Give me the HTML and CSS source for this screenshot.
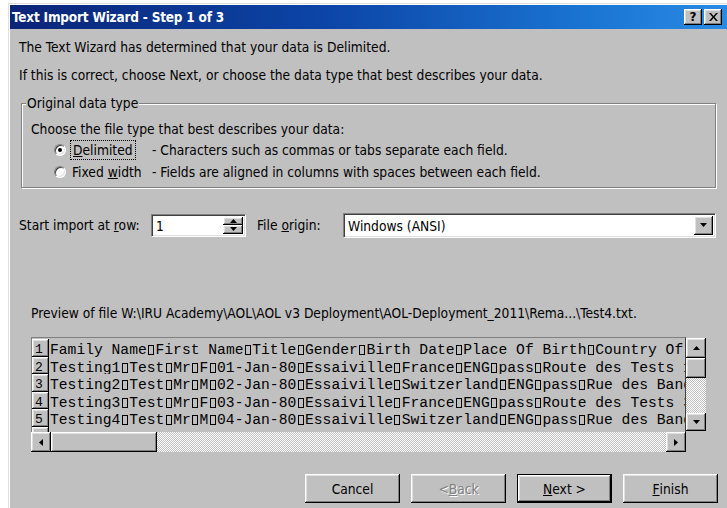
FILE: index.html
```html
<!DOCTYPE html>
<html>
<head>
<meta charset="utf-8">
<title>Text Import Wizard</title>
<link rel="stylesheet" href="styles.css">
</head>
<body>
<div class="window">
  <div class="titlebar">
    <span class="title">Text Import Wizard - Step 1 of 3</span>
    <div class="caption-btns">
      <span class="cbtn help">?</span>
      <span class="cbtn close"><svg width="9" height="8" viewBox="0 0 9 8"><path d="M0 0h2l2.5 3 2.5-3h2L5.5 4 9 8H7L4.5 5 2 8H0l3.5-4z" fill="#000"/></svg></span>
    </div>
  </div>
  <div class="content">
    <p class="intro">The Text Wizard has determined that your data is Delimited.</p>
    <p class="intro second">If this is correct, choose Next, or choose the data type that best describes your data.</p>

    <fieldset class="group">
      <legend>Original data type</legend>
      <p class="choose">Choose the file type that best describes your data:</p>
      <div class="opt">
        <span class="radio checked"></span>
        <span class="opt-label"><span class="focus"><u>D</u>elimited</span></span>
        <span class="opt-desc">- Characters such as commas or tabs separate each field.</span>
      </div>
      <div class="opt">
        <span class="radio"></span>
        <span class="opt-label">Fixed <u>w</u>idth</span>
        <span class="opt-desc">- Fields are aligned in columns with spaces between each field.</span>
      </div>
    </fieldset>

    <div class="import-row">
      <span class="row-label">Start import at <u>r</u>ow:</span>
      <div class="spin">
        <span class="spin-val">1</span>
        <span class="spin-btns">
          <span class="sbtn"><svg width="7" height="4" viewBox="0 0 7 4"><path d="M3.5 0L7 4H0z" fill="#000"/></svg></span>
          <span class="sbtn"><svg width="7" height="4" viewBox="0 0 7 4"><path d="M0 0h7L3.5 4z" fill="#000"/></svg></span>
        </span>
      </div>
      <span class="origin-label">File <u>o</u>rigin:</span>
      <div class="combo">
        <span class="combo-val">Windows (ANSI)</span>
        <span class="combo-btn"><svg width="7" height="4" viewBox="0 0 7 4"><path d="M0 0h7L3.5 4z" fill="#000"/></svg></span>
      </div>
    </div>

    <p class="preview-label">Preview of file W:\IRU Academy\AOL\AOL v3 Deployment\AOL-Deployment_2011\Rema...\Test4.txt.</p>

    <div class="preview">
      <div class="grid">
        <div class="prow"><span class="num">1</span><span class="line">Family Name<i class="t"></i>First Name<i class="t"></i>Title<i class="t"></i>Gender<i class="t"></i>Birth Date<i class="t"></i>Place Of Birth<i class="t"></i>Country Of Residence</span></div>
        <div class="prow"><span class="num">2</span><span class="line">Testing1<i class="t"></i>Test<i class="t"></i>Mr<i class="t"></i>F<i class="t"></i>01-Jan-80<i class="t"></i>Essaiville<i class="t"></i>France<i class="t"></i>ENG<i class="t"></i>pass<i class="t"></i>Route des Tests 1</span></div>
        <div class="prow"><span class="num">3</span><span class="line">Testing2<i class="t"></i>Test<i class="t"></i>Mr<i class="t"></i>M<i class="t"></i>02-Jan-80<i class="t"></i>Essaiville<i class="t"></i>Switzerland<i class="t"></i>ENG<i class="t"></i>pass<i class="t"></i>Rue des Banques</span></div>
        <div class="prow"><span class="num">4</span><span class="line">Testing3<i class="t"></i>Test<i class="t"></i>Mr<i class="t"></i>F<i class="t"></i>03-Jan-80<i class="t"></i>Essaiville<i class="t"></i>France<i class="t"></i>ENG<i class="t"></i>pass<i class="t"></i>Route des Tests 3</span></div>
        <div class="prow"><span class="num">5</span><span class="line">Testing4<i class="t"></i>Test<i class="t"></i>Mr<i class="t"></i>M<i class="t"></i>04-Jan-80<i class="t"></i>Essaiville<i class="t"></i>Switzerland<i class="t"></i>ENG<i class="t"></i>pass<i class="t"></i>Rue des Banques</span></div>
        <div class="prow"><span class="num">6</span><span class="line"></span></div>
      </div>
      <div class="vscroll">
        <span class="sbox"><svg width="7" height="4" viewBox="0 0 7 4"><path d="M3.5 0L7 4H0z" fill="#000"/></svg></span>
        <span class="thumb vthumb"></span>
        <span class="track"></span>
        <span class="sbox"><svg width="7" height="4" viewBox="0 0 7 4"><path d="M0 0h7L3.5 4z" fill="#000"/></svg></span>
      </div>
      <div class="hscroll">
        <span class="sbox"><svg width="4" height="7" viewBox="0 0 4 7"><path d="M0 3.5L4 0v7z" fill="#000"/></svg></span>
        <span class="thumb hthumb"></span>
        <span class="track"></span>
        <span class="sbox"><svg width="4" height="7" viewBox="0 0 4 7"><path d="M0 0l4 3.5L0 7z" fill="#000"/></svg></span>
      </div>
    </div>

    <div class="buttons">
      <span class="btn">Cancel</span>
      <span class="btn disabled">&lt; <u>B</u>ack</span>
      <span class="btn default"><u>N</u>ext &gt;</span>
      <span class="btn"><u>F</u>inish</span>
    </div>
  </div>
</div>
</body>
</html>
```

FILE: styles.css
```css
* { box-sizing: border-box; }

body {
  margin: 0;
  background: #fff;
  font-family: "DejaVu Sans Condensed", "DejaVu Sans", sans-serif;
  font-size: 13.7px;
  color: #000;
}

p { margin: 0; }

/* dialog frame */
.window {
  margin: 3px 0 0 8px;
  width: 719px;
  height: 505px;
  background: #c0c0c0;
  border-left: 1px solid #dfdfdf;
  border-top: 1px solid #dfdfdf;
  box-shadow: inset 1px 1px #fff;
  padding: 1px 0 0 1px;
  overflow: hidden;
}

.titlebar {
  height: 24px;
  display: flex;
  align-items: center;
  justify-content: space-between;
  background: linear-gradient(90deg, #0a2478 0%, #0c46a8 45%, #1a74d2 80%, #2a8ae4 100%);
  padding: 0 5px 0 2px;
}

.title {
  color: #fff;
  font-weight: bold;
  font-size: 13.5px;
  letter-spacing: -0.2px;
}

.caption-btns { display: flex; gap: 2px; }

/* raised 3D look shared by buttons */
.cbtn, .sbtn, .combo-btn, .sbox, .thumb, .num, .btn {
  background: #c0c0c0;
  box-shadow: inset -1px -1px #000, inset 1px 1px #fff, inset -2px -2px #808080, inset 2px 2px #dfdfdf;
}

.cbtn {
  width: 18px;
  height: 16px;
  display: flex;
  align-items: center;
  justify-content: center;
  font-weight: bold;
  font-size: 12px;
  font-family: "DejaVu Sans", sans-serif;
}

.content {
  padding: 0 11px 0 9px;
}

.intro { line-height: 18px; margin-top: 9px; }
.intro.second { margin-top: 10px; }

/* etched group box */
.group {
  margin: 10px 0 0 2px;
  padding: 0 9px 4px 9px;
  border: 1px solid #808080;
  box-shadow: inset 1px 1px #fff, 1px 1px #fff;
  min-width: 0;
}

.group legend {
  padding: 0 1px;
  margin-left: -5px;
  line-height: 18px;
  background: #c0c0c0;
}

.choose { line-height: 18px; margin-top: 8px; }

.opt {
  display: flex;
  align-items: center;
  height: 22px;
}
.opt:first-of-type { margin-top: 1px; }

.radio {
  width: 12px;
  height: 12px;
  margin-left: 23px;
  border-radius: 50%;
  background: #fff;
  border: 1px solid;
  border-color: #808080 #fff #fff #808080;
  box-shadow: inset 1px 1px #404040, inset -1px -1px #dfdfdf;
  display: flex;
  align-items: center;
  justify-content: center;
}
.radio.checked::after {
  content: "";
  width: 4px;
  height: 4px;
  border-radius: 50%;
  background: #000;
}

.opt-label {
  width: 80px;
  margin-left: 6px;
  flex: none;
}
.focus {
  outline: 1px dotted #000;
  outline-offset: 1px;
  padding: 0 1px;
}

.opt-desc { white-space: nowrap; }

/* start row / file origin */
.import-row {
  display: flex;
  align-items: center;
  margin-top: 24px;
  height: 26px;
}
.row-label { width: 132px; flex: none; }
.origin-label { width: 86px; margin-left: 11px; flex: none; }

.spin, .combo {
  background: #fff;
  border: 1px solid;
  border-color: #808080 #fff #fff #808080;
  box-shadow: inset 1px 1px #404040, inset -1px -1px #dfdfdf;
  padding: 2px;
  display: flex;
  align-items: stretch;
}

.spin { width: 95px; height: 23px; flex: none; }
.spin-val { flex: 1; padding-left: 2px; line-height: 19px; }
.spin-btns { width: 20px; display: flex; flex-direction: column; }
.sbtn {
  flex: 1;
  display: flex;
  align-items: center;
  justify-content: center;
}

.combo { flex: 1; height: 25px; }
.combo-val { flex: 1; padding-left: 2px; line-height: 21px; }
.combo-btn {
  width: 19px;
  display: flex;
  align-items: center;
  justify-content: center;
}

.preview-label {
  line-height: 18px;
  margin: 66px 0 0 12px;
}

/* preview grid with scrollbars */
.preview {
  margin: 15px 0 0 12px;
  display: grid;
  grid-template-columns: 655px 20px;
  grid-template-rows: 95px 20px;
}

.grid {
  border-top: 1px solid #808080;
  border-left: 1px solid #808080;
  border-right: 1px solid #404040;
  overflow: hidden;
  padding-top: 1px;
  font-family: "Liberation Mono", "Courier New", monospace;
  font-size: 14.67px;
}

.prow {
  display: flex;
  height: 17.5px;
}

.num {
  width: 17px;
  flex: none;
  padding: 4px 0 0 3px;
  line-height: 13px;
  font-size: 13px;
}

.line {
  white-space: nowrap;
  overflow: hidden;
  line-height: 14px;
  padding: 4px 0 0 1px;
}

.t {
  display: inline-block;
  width: 6px;
  height: 10px;
  margin: 0 1.4px;
  border: 1px solid #000;
  vertical-align: -1px;
}

.vscroll {
  display: flex;
  flex-direction: column;
  padding-top: 1px;
  height: 94px;
}
.hscroll {
  display: flex;
  grid-column: 1;
}

.sbox {
  width: 20px;
  height: 20px;
  flex: none;
  display: flex;
  align-items: center;
  justify-content: center;
}
.vthumb { height: 20px; flex: none; }
.hthumb { width: 106px; flex: none; }
.track {
  flex: 1;
  background: repeating-conic-gradient(#fff 0 25%, #c0c0c0 0 50%) 0 0 / 2px 2px;
}
.vscroll .sbox:last-child { height: 18px; }

/* dialog buttons */
.buttons {
  display: flex;
  justify-content: flex-end;
  gap: 11px;
  margin: 22px -2px 0 0;
}

.btn {
  width: 95px;
  height: 29px;
  display: flex;
  align-items: center;
  justify-content: center;
}
.btn.default {
  box-shadow: inset 0 0 0 1px #000, inset -2px -2px #000, inset 2px 2px #fff, inset -3px -3px #808080, inset 3px 3px #dfdfdf;
}
.btn.disabled {
  color: #808080;
  text-shadow: 1px 1px #fff;
}
```
